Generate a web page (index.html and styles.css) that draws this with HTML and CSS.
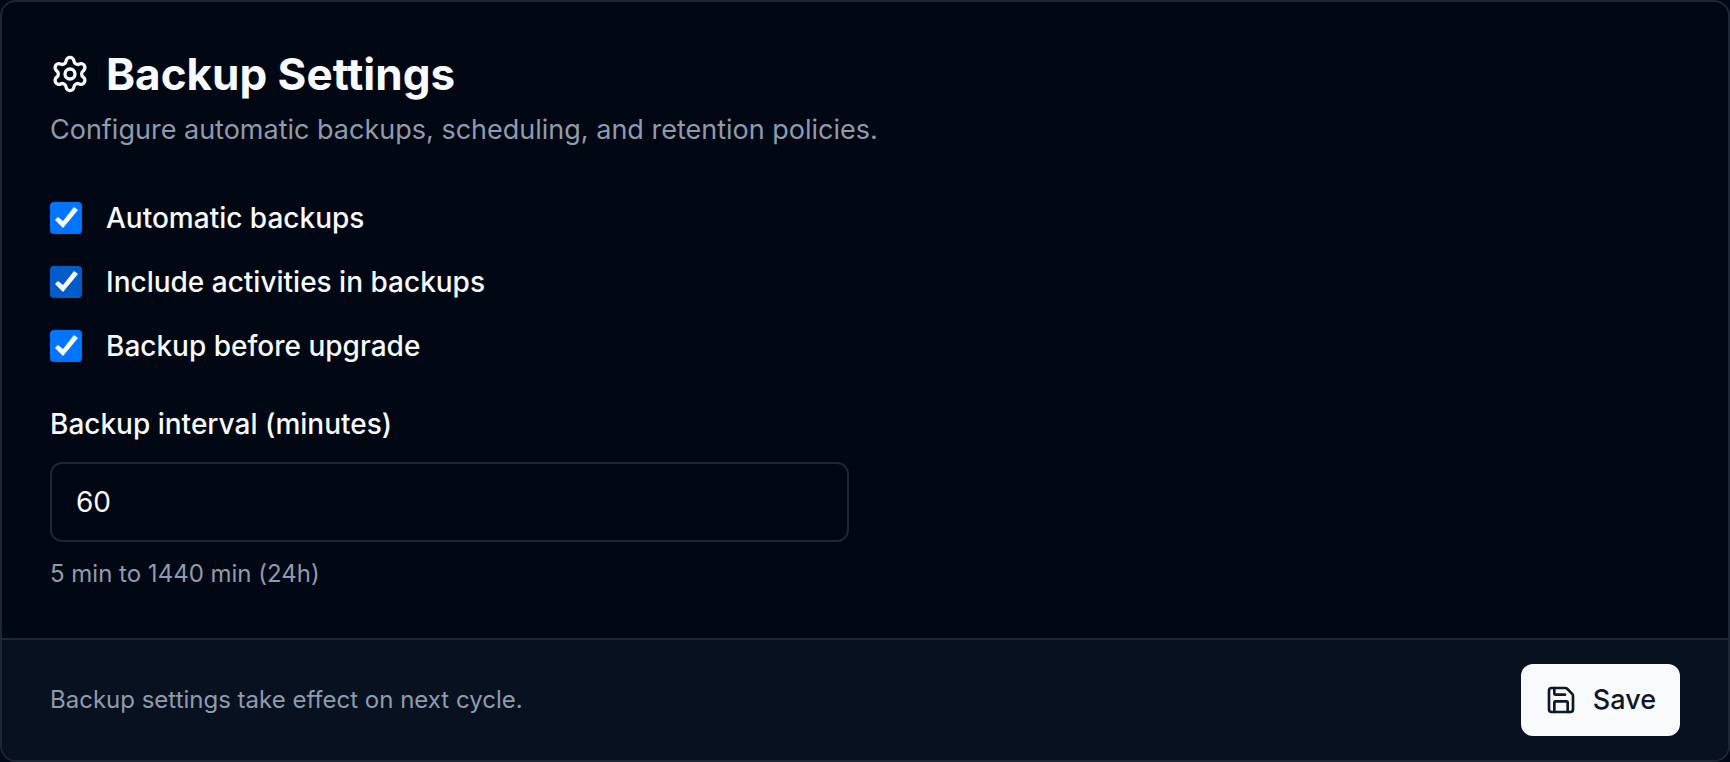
FILE: index.html
```html
<!DOCTYPE html>
<html lang="en">
<head>
	<meta charset="UTF-8">
	<meta name="viewport" content="width=device-width, initial-scale=1.0">
	<title>Backup Settings</title>
	<link rel="stylesheet" href="styles.css">
</head>
<body>

<form class="card">
	<div class="card-header">
		<h1 class="card-title">
			<svg class="icon-gear" viewBox="0 0 24 24" aria-hidden="true">
				<path d="M9.671 4.136a2.34 2.34 0 0 1 4.659 0 2.34 2.34 0 0 0 3.319 1.915 2.34 2.34 0 0 1 2.33 4.033 2.34 2.34 0 0 0 0 3.831 2.34 2.34 0 0 1-2.33 4.033 2.34 2.34 0 0 0-3.319 1.915 2.34 2.34 0 0 1-4.659 0 2.34 2.34 0 0 0-3.32-1.915 2.34 2.34 0 0 1-2.33-4.033 2.34 2.34 0 0 0 0-3.831A2.34 2.34 0 0 1 6.35 6.051a2.34 2.34 0 0 0 3.319-1.915"/>
				<circle cx="12" cy="12" r="3"/>
			</svg>
			Backup Settings
		</h1>
		<p class="card-description">Configure automatic backups, scheduling, and retention policies.</p>
	</div>

	<div class="card-content">
		<div class="options">
			<div class="option">
				<input type="checkbox" id="auto_backup" checked>
				<label for="auto_backup">Automatic backups</label>
			</div>
			<div class="option active">
				<input type="checkbox" id="include_activities" checked>
				<label for="include_activities">Include activities in backups</label>
			</div>
			<div class="option">
				<input type="checkbox" id="before_upgrade" checked>
				<label for="before_upgrade">Backup before upgrade</label>
			</div>
		</div>

		<div class="fields">
			<div class="field">
				<label for="interval">Backup interval (minutes)</label>
				<input type="text" inputmode="numeric" id="interval" value="60">
				<p class="hint">5 min to 1440 min (24h)</p>
			</div>
		</div>
	</div>

	<div class="card-footer">
		<p class="note">Backup settings take effect on next cycle.</p>
		<button type="button" class="btn-save">
			<svg class="icon-save" viewBox="0 0 24 24" aria-hidden="true">
				<path d="M15.2 3a2 2 0 0 1 1.4.6l3.8 3.8a2 2 0 0 1 .6 1.4V19a2 2 0 0 1-2 2H5a2 2 0 0 1-2-2V5a2 2 0 0 1 2-2z"/>
				<path d="M17 21v-7a1 1 0 0 0-1-1H8a1 1 0 0 0-1 1v7"/>
				<path d="M7 3v4a1 1 0 0 0 1 1h7"/>
			</svg>
			Save
		</button>
	</div>
</form>

</body>
</html>
```
FILE: styles.css
```css
* {
	box-sizing: border-box;
	margin: 0;
	padding: 0;
}
body {
	background: #020817;
	color: #f8fafc;
	font-family: Inter, "Helvetica Neue", Arial, sans-serif;
	font-size: 27px;
	line-height: 40px;
}
svg {
	flex-shrink: 0;
	fill: none;
	stroke: currentColor;
	stroke-width: 2;
	stroke-linecap: round;
	stroke-linejoin: round;
}
.card {
	border: 2px solid #1e2736;
	border-radius: 16px;
	background: #010713;
	overflow: hidden;
}
.card-header {
	padding: 48px;
}
.card-title {
	display: flex;
	align-items: center;
	gap: 16px;
	margin-bottom: 12px;
	font-size: 44px;
	line-height: 48px;
	font-weight: 700;
}
.icon-gear {
	width: 40px;
	height: 40px;
}
.card-description {
	color: #8f9bad;
}
.card-content {
	padding: 0 48px 48px;
}
.options {
	display: flex;
	flex-direction: column;
	gap: 24px;
	margin-bottom: 44px;
}
.option {
	display: flex;
	align-items: center;
	gap: 24px;
}
.option label, .field label {
	font-size: 28px;
	font-weight: 500;
}
.option input {
	appearance: none;
	width: 32px;
	height: 32px;
	border-radius: 4px;
	border: 2px solid #767676;
}
.option input:checked {
	border: 0;
	background: #0075ff;
}
.option input:checked:before {
	content: "";
	display: block;
	width: 32px;
	height: 32px;
	background: #ffffff;
	clip-path: polygon(5px 18px, 8px 15px, 13px 19px, 24px 5px, 28px 8px, 13px 26px);
}
.option.active input:checked {
	background: #005cc8;
}
.fields {
	display: grid;
	grid-template-columns: 1fr 1fr;
	gap: 32px;
}
.field label {
	display: block;
	margin-bottom: 24px;
	line-height: 28px;
}
.field input {
	display: block;
	width: 100%;
	height: 80px;
	padding: 0 24px;
	border: 2px solid #1e2736;
	border-radius: 12px;
	background: transparent;
	color: inherit;
	font: inherit;
	font-size: 28px;
}
.hint, .note {
	color: #8f9bad;
	font-size: 24px;
	line-height: 32px;
}
.hint {
	margin-top: 16px;
}
.card-footer {
	display: flex;
	align-items: center;
	justify-content: space-between;
	padding: 24px 48px;
	border-top: 2px solid #1e2736;
	background: #081120;
}
.btn-save {
	display: flex;
	align-items: center;
	gap: 16px;
	height: 72px;
	padding: 0 24px;
	border: 0;
	border-radius: 12px;
	background: #f8fafc;
	color: #0f172a;
	font: inherit;
	font-weight: 500;
	cursor: pointer;
}
.icon-save {
	width: 32px;
	height: 32px;
}
```
